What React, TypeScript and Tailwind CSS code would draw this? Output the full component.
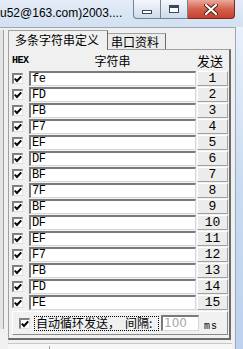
import React from "react";

const rows = ["fe", "FD", "FB", "F7", "EF", "DF", "BF", "7F", "BF", "DF", "EF", "F7", "FB", "FD", "FE"];

const cjk = { fontFamily: '"Noto Sans CJK SC", "Liberation Sans", sans-serif' };
const mono = { fontFamily: '"Liberation Mono", "DejaVu Sans Mono", monospace' };

function Check() {
  return (
    <div className="w-[11px] h-[11px] bg-white border-t-2 border-l-2 border-t-[#808080] border-l-[#808080] border-b border-r border-b-[#e0e0e0] border-r-[#e0e0e0] flex items-center justify-center">
      <svg width="8" height="8" viewBox="0 0 8 8">
        <polyline points="0.8,3.6 3,6 7.2,1.4" fill="none" stroke="#000" strokeWidth="2" />
      </svg>
    </div>
  );
}

function Row({ text, n }: { text: string; n: number }) {
  return (
    <div className="flex h-[15px] mb-[1px]">
      <div className="w-[17px] flex items-center">
        <Check />
      </div>
      <div
        className="w-[167px] h-[15px] bg-white border-t-2 border-l-2 border-t-[#7a7a7a] border-l-[#7a7a7a] border-b border-r border-b-[#d8d8d8] border-r-[#d8d8d8] pl-[1px] text-[12px] leading-[13px] tracking-[-0.5px] text-black"
        style={mono}
      >
        {text}
      </div>
      <div
        className="ml-[1px] w-[31px] h-[15px] bg-[#ececec] border-t border-l border-t-white border-l-white border-b border-r border-b-[#a0a0a0] border-r-[#a0a0a0] flex items-center justify-center text-[13px] leading-none text-black"
        style={mono}
      >
        {n}
      </div>
    </div>
  );
}

export default function App() {
  return (
    <div className="w-[243px] h-[349px] flex flex-col overflow-hidden bg-[#d3e1f2]">
      {/* title bar */}
      <div className="h-[27px] flex shrink-0 bg-gradient-to-b from-[#e3ecf7] to-[#d2e0f1]">
        <div className="flex-1 pt-[6px] text-[12px] leading-[14px] text-black whitespace-nowrap" style={{ fontFamily: '"Liberation Sans", Arial, sans-serif' }}>
          u52@163.com)2003....
        </div>
        <div className="w-[28px] h-[19px] border border-t-0 border-[#75839a] rounded-bl-[4px] bg-gradient-to-b from-[#f4f7fb] to-[#cfdbea] flex items-end justify-center pb-[4px]">
          <div className="w-[10px] h-[4px] bg-white border border-[#39485e]" />
        </div>
        <div className="w-[27px] h-[19px] border border-t-0 border-l-0 border-[#75839a] bg-gradient-to-b from-[#f4f7fb] to-[#cfdbea] flex items-center justify-center">
          <div className="w-[10px] h-[8px] bg-white border border-[#39485e] border-t-[3px]" />
        </div>
        <div className="w-[47px] h-[19px] border border-t-0 border-l-0 border-[#7a2a20] rounded-br-[4px] bg-gradient-to-b from-[#e9a99c] via-[#d4604c] to-[#c3412c] flex items-center justify-center">
          <svg width="14" height="11" viewBox="0 0 14 11">
            <path d="M2 1 L12 10 M12 1 L2 10" stroke="#4a1c14" strokeWidth="4" strokeLinecap="round" />
            <path d="M2 1 L12 10 M12 1 L2 10" stroke="#ffffff" strokeWidth="2.2" strokeLinecap="round" />
          </svg>
        </div>
        <div className="w-[8px]" />
      </div>

      <div className="flex flex-1">
        {/* client area */}
        <div className="w-[236px] bg-[#f0f0f0] border-t border-r border-[#9aa7b8] flex">
          <div className="w-[8px] pt-[2px]">
            <div className="w-[4px] h-[299px] bg-[#e4e4e4] border-r border-[#a0a0a0]" />
          </div>
          <div className="w-[224px] flex flex-col">
            {/* tabs */}
            <div className="h-[21px] flex items-end" style={cjk}>
              <div className="relative z-10 -mb-[1px] w-[100px] h-[20px] bg-[#f0f0f0] border-t border-l border-r border-t-[#a0a0a0] border-l-[#a0a0a0] border-r-[#6a6a6a] pl-[6px] pt-[1px] text-[12px] leading-[16px] text-black">
                多条字符串定义
              </div>
              <div className="w-[58px] h-[16px] bg-[#ececec] border-t border-r border-t-[#a0a0a0] border-r-[#6a6a6a] pl-[3px] text-[12px] leading-[15px] text-black">
                串口资料
              </div>
            </div>
            {/* tab panel */}
            <div className="w-[223px] h-[291px] border-t border-l border-t-[#a0a0a0] border-l-[#a0a0a0] border-r-2 border-b-2 border-r-[#6a6a6a] border-b-[#6a6a6a] pl-[3px] pb-[2px] flex flex-col">
              <div className="h-[21px] flex items-center text-black">
                <div className="w-[17px] text-[10px] leading-none font-bold tracking-[-0.5px]" style={mono}>HEX</div>
                <div className="w-[167px] text-center text-[12px] leading-none" style={cjk}>字符串</div>
                <div className="ml-[1px] w-[31px] text-[13px] leading-none whitespace-nowrap" style={cjk}>发送</div>
              </div>
              {rows.map((r, i) => (
                <Row key={i} text={r} n={i + 1} />
              ))}
              <div className="w-[216px] h-[24px] border-t border-l border-t-white border-l-white border-r border-b border-r-[#8a8a8a] border-b-[#8a8a8a] pl-[6px] flex items-center">
                <Check />
                <div className="ml-[4px] w-[125px] h-[15px] outline outline-1 outline-dotted outline-black -outline-offset-1 pl-[2px] flex items-center text-[12px] leading-none text-black whitespace-nowrap" style={cjk}>
                  自动循环发送，<span className="ml-[5px]">间隔:</span>
                </div>
                <div
                  className="ml-[2px] w-[38px] h-[16px] bg-white border-t-2 border-l-2 border-t-[#7a7a7a] border-l-[#7a7a7a] border-b border-r border-b-[#d8d8d8] border-r-[#d8d8d8] pl-[1px] text-[12px] leading-[13px] text-[#a8a8a8]"
                  style={{ fontFamily: '"DejaVu Sans", "Liberation Sans", sans-serif' }}
                >
                  100
                </div>
                <div className="ml-[5px] mt-[7px] text-[10px] leading-none tracking-[1px] text-black" style={mono}>
                  ms
                </div>
              </div>
            </div>
            <div className="h-[3px]" />
            <div className="flex-1 bg-[#f7f7f7] border-t border-[#c8c8c8] flex">
              <div className="w-[42px] border-r border-[#a0a0a0] mt-[2px]" />
            </div>
          </div>
        </div>
        {/* window frame */}
        <div className="w-[7px] bg-gradient-to-b from-[#e8f0fa] via-[#c9dbf0] to-[#bcd2ee]" />
      </div>
    </div>
  );
}
